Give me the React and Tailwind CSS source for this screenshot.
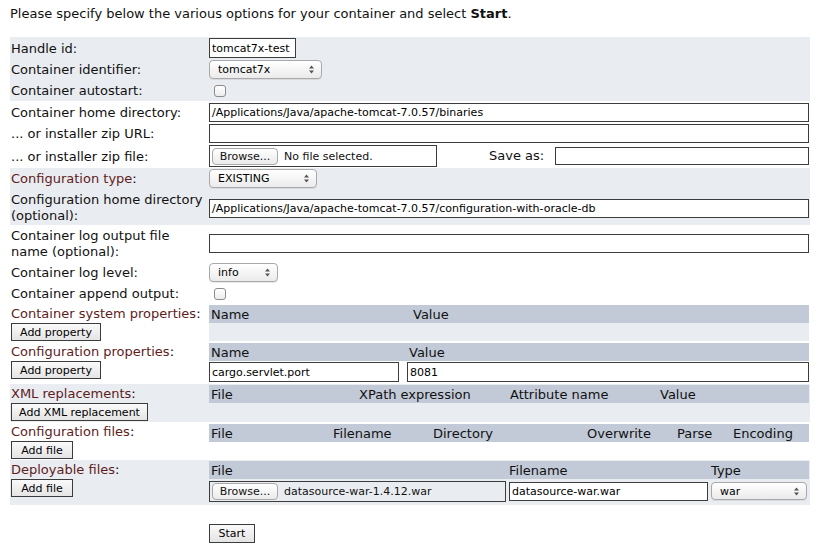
import React from "react";

// little up/down arrows drawn on the right of a mac style select
function Arrows() {
  return (
    <svg width="7" height="9" viewBox="0 0 7 9" className="shrink-0">
      <path d="M3.5 0.5 L6 3.5 L1 3.5 Z" fill="#555" />
      <path d="M3.5 8.5 L6 5.5 L1 5.5 Z" fill="#555" />
    </svg>
  );
}

function Select({ value, className }) {
  return (
    <div
      className={`flex items-center justify-between rounded-[4px] border border-[#a9a9a9] bg-linear-to-b from-white to-[#ebebeb] pl-2 pr-[6px] text-[11px] leading-none text-black shadow-[0_1px_0_rgba(0,0,0,0.08)] ${className}`}
    >
      <span>{value}</span>
      <Arrows />
    </div>
  );
}

function TextBox({ value = "", className = "" }) {
  return (
    <div
      className={`flex items-center border border-[#3c3c3c] bg-white px-[2px] pt-px text-[11px] leading-none text-black ${className}`}
    >
      {value}
    </div>
  );
}

function Checkbox() {
  return (
    <div className="ml-[5px] h-[12px] w-[12px] rounded-[3px] border border-[#8c8c8c] bg-linear-to-b from-white to-[#ededed]" />
  );
}

function Browse() {
  return (
    <div className="flex h-[17px] w-[66px] items-center justify-center rounded-[4px] border border-[#a9a9a9] bg-linear-to-b from-white to-[#ebebeb] text-[11px] leading-none">
      Browse...
    </div>
  );
}

function FileBox({ name, className = "" }) {
  return (
    <div className={`flex items-center gap-[6px] border border-[#3c3c3c] pl-[2px] text-[11px] leading-none ${className}`}>
      <Browse />
      <span>{name}</span>
    </div>
  );
}

function SquareButton({ children, className = "" }) {
  return (
    <div
      className={`flex h-[18px] items-center justify-center border border-[#3c3c3c] bg-linear-to-b from-[#fafafa] to-[#e4e4e4] text-[11px] leading-none text-black ${className}`}
    >
      {children}
    </div>
  );
}

function Row({ label, red, h, children }) {
  return (
    <div className={`flex items-center ${h}`}>
      <div className={`w-[199px] pl-px pt-px ${red ? "text-[#5e1c1c]" : ""}`}>
        {red ? (
          <>
            {label}
            <span className="text-black">:</span>
          </>
        ) : (
          label
        )}
      </div>
      <div className="flex w-[600px] items-center">{children}</div>
    </div>
  );
}

function Head({ cols }) {
  return (
    <div className="flex h-[18px] items-center bg-[#c2cad8] pt-px">
      {cols.map(([text, w]) => (
        <div key={text} className={`${w} shrink-0 pl-[2px]`}>
          {text}
        </div>
      ))}
    </div>
  );
}

function Section({ label, button, btnW, bg = "", h, children }) {
  return (
    <div className={`flex ${h} ${bg}`}>
      <div className="w-[199px] pl-px">
        <div className="flex h-[19px] items-center pt-px text-[#5e1c1c]">
          {label}
          <span className="text-black">:</span>
        </div>
        <SquareButton className={btnW}>{button}</SquareButton>
      </div>
      <div className="w-[600px] pt-px">{children}</div>
    </div>
  );
}

export default function App() {
  return (
    <div className="h-[550px] w-[820px] bg-white font-['DejaVu_Sans',sans-serif] text-[13px] leading-[16px] text-[#111]">
      <div className="flex h-[22px] items-end pl-[10px]">
        <p>
          Please specify below the various options for your container and select <b>Start</b>.
        </p>
      </div>

      <div className="ml-[10px] mt-[15px] w-[800px]">
        {/* group 1 */}
        <div className="bg-[#e9ecf0]">
          <Row label="Handle id:" h="h-[22px]">
            <TextBox value="tomcat7x-test" className="h-[20px] w-[87px]" />
          </Row>
          <Row label="Container identifier:" h="h-[21px]">
            <Select value="tomcat7x" className="h-[19px] w-[113px]" />
          </Row>
          <Row label="Container autostart:" h="h-[21px]">
            <Checkbox />
          </Row>
        </div>

        {/* group 2 */}
        <div>
          <Row label="Container home directory:" h="h-[22px]">
            <TextBox value="/Applications/Java/apache-tomcat-7.0.57/binaries" className="h-[19px] w-[600px]" />
          </Row>
          <Row label="... or installer zip URL:" h="h-[21px]">
            <TextBox className="h-[19px] w-[600px]" />
          </Row>
          <Row label="... or installer zip file:" h="h-[24px]">
            <FileBox name="No file selected." className="h-[22px] w-[228px]" />
            <span className="ml-[52px] w-[66px]">Save as:</span>
            <TextBox className="h-[18px] w-[254px]" />
          </Row>
        </div>

        {/* group 3 */}
        <div className="bg-[#e9ecf0]">
          <Row label="Configuration type" red h="h-[21px]">
            <Select value="EXISTING" className="h-[19px] w-[108px]" />
          </Row>
          <Row label="Configuration home directory (optional):" h="h-[36px]">
            <TextBox value="/Applications/Java/apache-tomcat-7.0.57/configuration-with-oracle-db" className="mt-[2px] h-[19px] w-[600px]" />
          </Row>
        </div>

        {/* group 4 */}
        <div>
          <Row label="Container log output file name (optional):" h="h-[37px]">
            <TextBox className="h-[19px] w-[600px]" />
          </Row>
          <Row label="Container log level:" h="h-[21px]">
            <Select value="info" className="h-[19px] w-[69px]" />
          </Row>
          <Row label="Container append output:" h="h-[21px]">
            <Checkbox />
          </Row>
        </div>

        <Section label="Container system properties" button="Add property" btnW="w-[90px]" h="h-[38px]">
          <Head cols={[["Name", "w-[202px]"], ["Value", "w-[200px]"]]} />
          <div className="h-[18px] bg-[#e9ecf0]" />
        </Section>

        <Section label="Configuration properties" button="Add property" btnW="w-[90px]" h="h-[42px]">
          <Head cols={[["Name", "w-[198px]"], ["Value", "w-[200px]"]]} />
          <div className="flex h-[21px] items-center">
            <TextBox value="cargo.servlet.port" className="h-[20px] w-[190px]" />
            <TextBox value="8081" className="ml-[8px] h-[20px] w-[402px]" />
          </div>
        </Section>

        <Section label="XML replacements" button="Add XML replacement" btnW="w-[137px]" bg="bg-[#e9ecf0]" h="h-[38px]">
          <Head
            cols={[
              ["File", "w-[148px]"],
              ["XPath expression", "w-[151px]"],
              ["Attribute name", "w-[150px]"],
              ["Value", "w-[100px]"],
            ]}
          />
        </Section>

        <Section label="Configuration files" button="Add file" btnW="w-[62px]" h="h-[38px]">
          <div className="mt-px">
            <Head
              cols={[
                ["File", "w-[122px]"],
                ["Filename", "w-[100px]"],
                ["Directory", "w-[154px]"],
                ["Overwrite", "w-[90px]"],
                ["Parse", "w-[56px]"],
                ["Encoding", "w-[70px]"],
              ]}
            />
          </div>
        </Section>

        <Section label="Deployable files" button="Add file" btnW="w-[62px]" bg="bg-[#e9ecf0]" h="h-[45px]">
          <Head
            cols={[
              ["File", "w-[298px]"],
              ["Filename", "w-[202px]"],
              ["Type", "w-[90px]"],
            ]}
          />
          <div className="flex h-[24px] items-center">
            <FileBox name="datasource-war-1.4.12.war" className="h-[21px] w-[297px]" />
            <TextBox value="datasource-war.war" className="ml-[3px] h-[19px] w-[199px]" />
            <Select value="war" className="ml-[3px] h-[18px] w-[96px]" />
          </div>
        </Section>

        <div className="flex pt-[19px]">
          <div className="w-[199px]" />
          <SquareButton className="h-[19px] w-[46px]">Start</SquareButton>
        </div>
      </div>
    </div>
  );
}
